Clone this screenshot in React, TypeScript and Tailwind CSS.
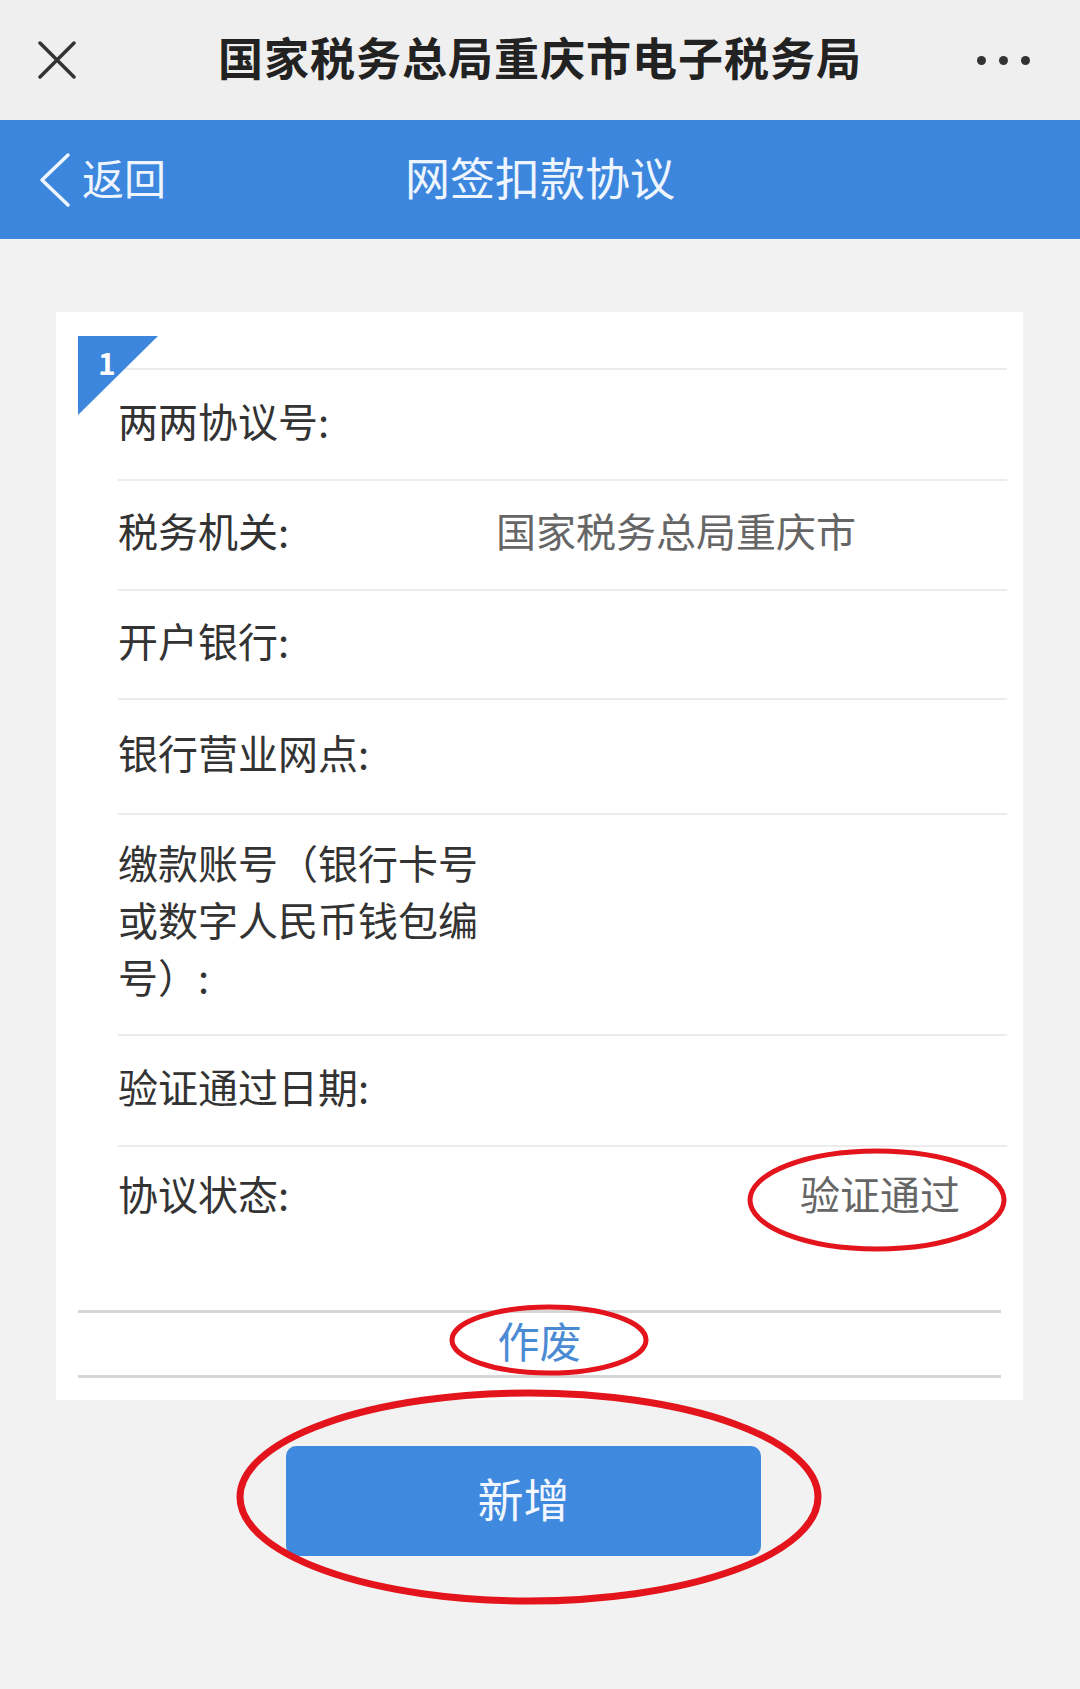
import React from "react";

const rows: { label: string; value?: string; h: string; multi?: boolean }[] = [
  { label: "两两协议号:", h: "h-[111px]" },
  { label: "税务机关:", value: "国家税务总局重庆市", h: "h-[110px]" },
  { label: "开户银行:", h: "h-[109px]" },
  { label: "银行营业网点:", h: "h-[115px]" },
  { label: "缴款账号（银行卡号或数字人民币钱包编号）:", h: "h-[221px]", multi: true },
  { label: "验证通过日期:", h: "h-[111px]" },
];

export default function App() {
  return (
    <div
      className="relative w-[1080px] h-[1689px] bg-[#f2f2f2] overflow-hidden"
      style={{ fontFamily: '"Noto Sans CJK SC", "Noto Sans", sans-serif' }}
    >
      {/* top bar */}
      <div className="h-[120px] bg-[#efefef] grid grid-cols-[1fr_auto_1fr] items-center">
        <div className="pl-[38px] flex items-center">
          <svg width="38" height="38" viewBox="0 0 38 38">
            <path d="M2 2 L36 36 M36 2 L2 36" stroke="#333" strokeWidth="3.5" strokeLinecap="round" />
          </svg>
        </div>
        <div className="text-[45px] leading-none font-bold text-[#222] tracking-[1px] pb-[8px]">
          国家税务总局重庆市电子税务局
        </div>
        <div className="flex justify-end pr-[50px] gap-[13px] items-center">
          <span className="w-[9px] h-[9px] rounded-full bg-[#333]" />
          <span className="w-[9px] h-[9px] rounded-full bg-[#333]" />
          <span className="w-[9px] h-[9px] rounded-full bg-[#333]" />
        </div>
      </div>

      {/* blue nav bar */}
      <div className="h-[119px] bg-[#3c87dd] grid grid-cols-[1fr_auto_1fr] items-center text-[#eef5ff]">
        <div className="flex items-center pl-[36px] gap-[10px]">
          <svg width="36" height="56" viewBox="0 0 36 56">
            <path d="M32 3 L6 28 L32 53" stroke="#eef5ff" strokeWidth="3.5" fill="none" strokeLinecap="round" strokeLinejoin="round" />
          </svg>
          <span className="text-[42px] leading-none pb-[6px]">返回</span>
        </div>
        <div className="text-[45px] leading-none pb-[7px]">网签扣款协议</div>
        <div />
      </div>

      {/* card */}
      <div className="relative mt-[73px] ml-[56px] w-[967px] h-[1088px] bg-white pt-[56px]">
        <div className="absolute left-[22px] top-[24px] w-[80px] h-[79px]">
          <svg width="80" height="79" viewBox="0 0 80 79" className="absolute inset-0">
            <polygon points="0,0 80,0 0,79" fill="#3c87dd" />
          </svg>
          <span className="absolute left-[20px] top-[11px] text-[30px] leading-none font-bold text-white">1</span>
        </div>

        <div className="ml-[62px] mr-[16px] border-t-2 border-[#ececec]">
          {rows.map((r, i) => (
            <div key={i} className={`${r.h} flex items-center border-b-2 border-[#ececec] pb-[10px]`}>
              <div
                className={`w-[378px] text-[40px] text-[#333] ${r.multi ? "leading-[57px] pr-[14px]" : "leading-none"}`}
              >
                {r.label}
              </div>
              {r.value && <div className="text-[40px] leading-none text-[#666]">{r.value}</div>}
            </div>
          ))}
          <div className="h-[100px] flex items-center justify-between pb-[8px]">
            <div className="text-[40px] leading-none text-[#333]">协议状态:</div>
            <div className="text-[40px] leading-none text-[#666] pr-[47px]">验证通过</div>
          </div>
        </div>

        <div className="mt-[63px] mx-[22px] border-t-[3px] border-b-[3px] border-[#d6d6d6] h-[68px] flex items-center justify-center pb-[8px]">
          <span className="text-[42px] leading-none text-[#4a8bd4]">作废</span>
        </div>
      </div>

      {/* button */}
      <div className="mt-[46px] ml-[286px] w-[475px] h-[110px] rounded-[10px] bg-[#3f89de] flex items-center justify-center pb-[8px]">
        <span className="text-[46px] leading-none text-[#f2f7ff]">新增</span>
      </div>

      {/* red annotation ellipses */}
      <svg className="absolute left-0 top-0 pointer-events-none" width="1080" height="1689" viewBox="0 0 1080 1689">
        <ellipse cx="877" cy="1200" rx="127" ry="49" fill="none" stroke="#e3141c" strokeWidth="5" />
        <ellipse cx="549" cy="1340" rx="97" ry="33" fill="none" stroke="#e3141c" strokeWidth="5" />
        <ellipse cx="529" cy="1497" rx="289" ry="104" fill="none" stroke="#e3141c" strokeWidth="7" />
      </svg>
    </div>
  );
}
